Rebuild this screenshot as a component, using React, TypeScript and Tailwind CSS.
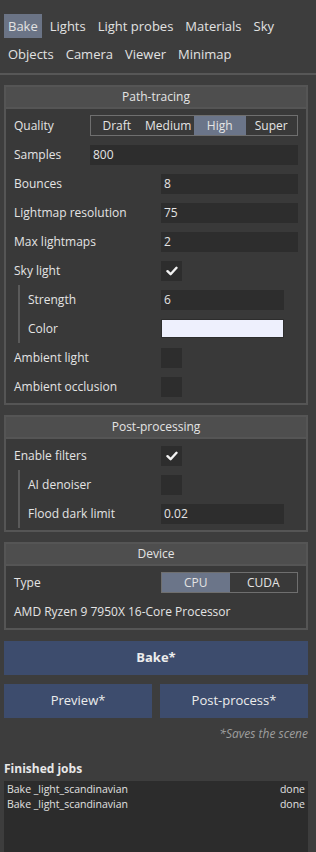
import React from "react";

const tabsRow1 = ["Bake", "Lights", "Light probes", "Materials", "Sky"];
const tabsRow2 = ["Objects", "Camera", "Viewer", "Minimap"];

function Check({ on }: { on?: boolean }) {
  return (
    <div className="w-[21px] h-[20px] bg-[#2d2d2d] flex items-center justify-center">
      {on && (
        <svg width="12" height="10" viewBox="0 0 12 10">
          <path d="M1.5 5.2 L4.6 8.2 L10.5 1.8" stroke="#f2f2f2" strokeWidth="2.4" fill="none" strokeLinecap="round" strokeLinejoin="round" />
        </svg>
      )}
    </div>
  );
}

function Input({ value, w }: { value: string; w: string }) {
  return <div className={`${w} h-[20px] bg-[#2d2d2d] text-[#e4e4e4] text-[12px] leading-[20px] px-[3px]`}>{value}</div>;
}

function Row({ label, children }: { label: string; children?: React.ReactNode }) {
  return (
    <div className="h-[29px] flex items-center justify-between">
      <span className="text-[12px] text-[#e4e4e4]">{label}</span>
      {children}
    </div>
  );
}

function Segmented({ items, active, w }: { items: string[]; active: string; w: string }) {
  return (
    <div className={`${w} h-[21px] border border-[#6f6f6f] flex`}>
      {items.map((it) => (
        <div
          key={it}
          className={`flex-1 flex items-center justify-center text-[12px] text-[#e4e4e4] ${it === active ? "bg-[#6b7589]" : ""}`}
        >
          {it}
        </div>
      ))}
    </div>
  );
}

function Panel({ title, children }: { title: string; children: React.ReactNode }) {
  return (
    <div className="border-2 border-[#555555] bg-[#393939]">
      <div className="h-[20px] bg-[#4e4e4e] border-b-2 border-[#555555] text-center text-[12px] leading-[20px] text-[#e4e4e4] box-content">
        {title}
      </div>
      <div className="pl-[8px] pr-[8px] pt-[2px] pb-[2px]">{children}</div>
    </div>
  );
}

function Indent({ children }: { children: React.ReactNode }) {
  return <div className="ml-[4px] mr-[14px] border-l-2 border-[#5a5a5a] pl-[8px]">{children}</div>;
}

export default function App() {
  return (
    <div className="w-[316px] h-[852px] overflow-hidden bg-[#3d3d3d] text-[#e4e4e4]" style={{ fontFamily: '"Open Sans", "Noto Sans", sans-serif' }}>
      {/* tabs */}
      <div className="pt-[14px] px-[4px] flex flex-col gap-[4px]">
        {[tabsRow1, tabsRow2].map((row, i) => (
          <div key={i} className="flex gap-[4px]">
            {row.map((t) => (
              <div key={t} className={`h-[24px] px-[4px] text-[13px] leading-[24px] text-[#e2e2e2] ${t === "Bake" ? "bg-[#6b7486]" : ""}`}>
                {t}
              </div>
            ))}
          </div>
        ))}
      </div>
      <div className="mt-[7px] h-[2px] bg-[#575757]" />

      <div className="pl-[4px] pr-[8px] pt-[10px] flex flex-col gap-[10px]">
        <Panel title="Path-tracing">
          <Row label="Quality">
            <Segmented items={["Draft", "Medium", "High", "Super"]} active="High" w="w-[208px]" />
          </Row>
          <Row label="Samples">
            <Input value="800" w="w-[208px]" />
          </Row>
          <Row label="Bounces">
            <Input value="8" w="w-[137px]" />
          </Row>
          <Row label="Lightmap resolution">
            <Input value="75" w="w-[137px]" />
          </Row>
          <Row label="Max lightmaps">
            <Input value="2" w="w-[137px]" />
          </Row>
          <Row label="Sky light">
            <div className="w-[137px]">
              <Check on />
            </div>
          </Row>
          <Indent>
            <Row label="Strength">
              <Input value="6" w="w-[123px]" />
            </Row>
            <Row label="Color">
              <div className="w-[123px] h-[19px] bg-[#eef0fd] border border-[#2d2d2d]" />
            </Row>
          </Indent>
          <Row label="Ambient light">
            <div className="w-[137px]">
              <Check />
            </div>
          </Row>
          <Row label="Ambient occlusion">
            <div className="w-[137px]">
              <Check />
            </div>
          </Row>
        </Panel>

        <Panel title="Post-processing">
          <Row label="Enable filters">
            <div className="w-[137px]">
              <Check on />
            </div>
          </Row>
          <Indent>
            <Row label="AI denoiser">
              <div className="w-[123px]">
                <Check />
              </div>
            </Row>
            <Row label="Flood dark limit">
              <Input value="0.02" w="w-[123px]" />
            </Row>
          </Indent>
        </Panel>

        <Panel title="Device">
          <Row label="Type">
            <Segmented items={["CPU", "CUDA"]} active="CPU" w="w-[137px]" />
          </Row>
          <Row label="AMD Ryzen 9 7950X 16-Core Processor" />
        </Panel>
      </div>

      {/* actions */}
      <div className="px-[4px] pr-[8px] pt-[11px] flex flex-col gap-[9px]">
        <div className="h-[34px] bg-[#3d4c6d] flex items-center justify-center text-[13px] font-bold text-[#ececec]">Bake*</div>
        <div className="flex gap-[8px]">
          <div className="flex-1 h-[34px] bg-[#3d4c6d] flex items-center justify-center text-[13px] text-[#ececec]">Preview*</div>
          <div className="flex-1 h-[34px] bg-[#3d4c6d] flex items-center justify-center text-[13px] text-[#ececec]">Post-process*</div>
        </div>
      </div>
      <div className="pr-[8px] pt-[8px] text-right text-[12px] leading-[16px] italic text-[#9d9d9d]">*Saves the scene</div>

      <div className="px-[4px] pr-[8px] pt-[19px]">
        <div className="text-[12px] font-bold text-[#e8e8e8] leading-[16px]">Finished jobs</div>
        <div className="mt-[4px] h-[80px] bg-[#2c2c2c] px-[3px] pt-[1px] text-[10.5px] text-[#e0e0e0]">
          <div className="flex justify-between leading-[15px]">
            <span>Bake _light_scandinavian</span>
            <span>done</span>
          </div>
          <div className="flex justify-between leading-[15px]">
            <span>Bake _light_scandinavian</span>
            <span>done</span>
          </div>
        </div>
      </div>
    </div>
  );
}
